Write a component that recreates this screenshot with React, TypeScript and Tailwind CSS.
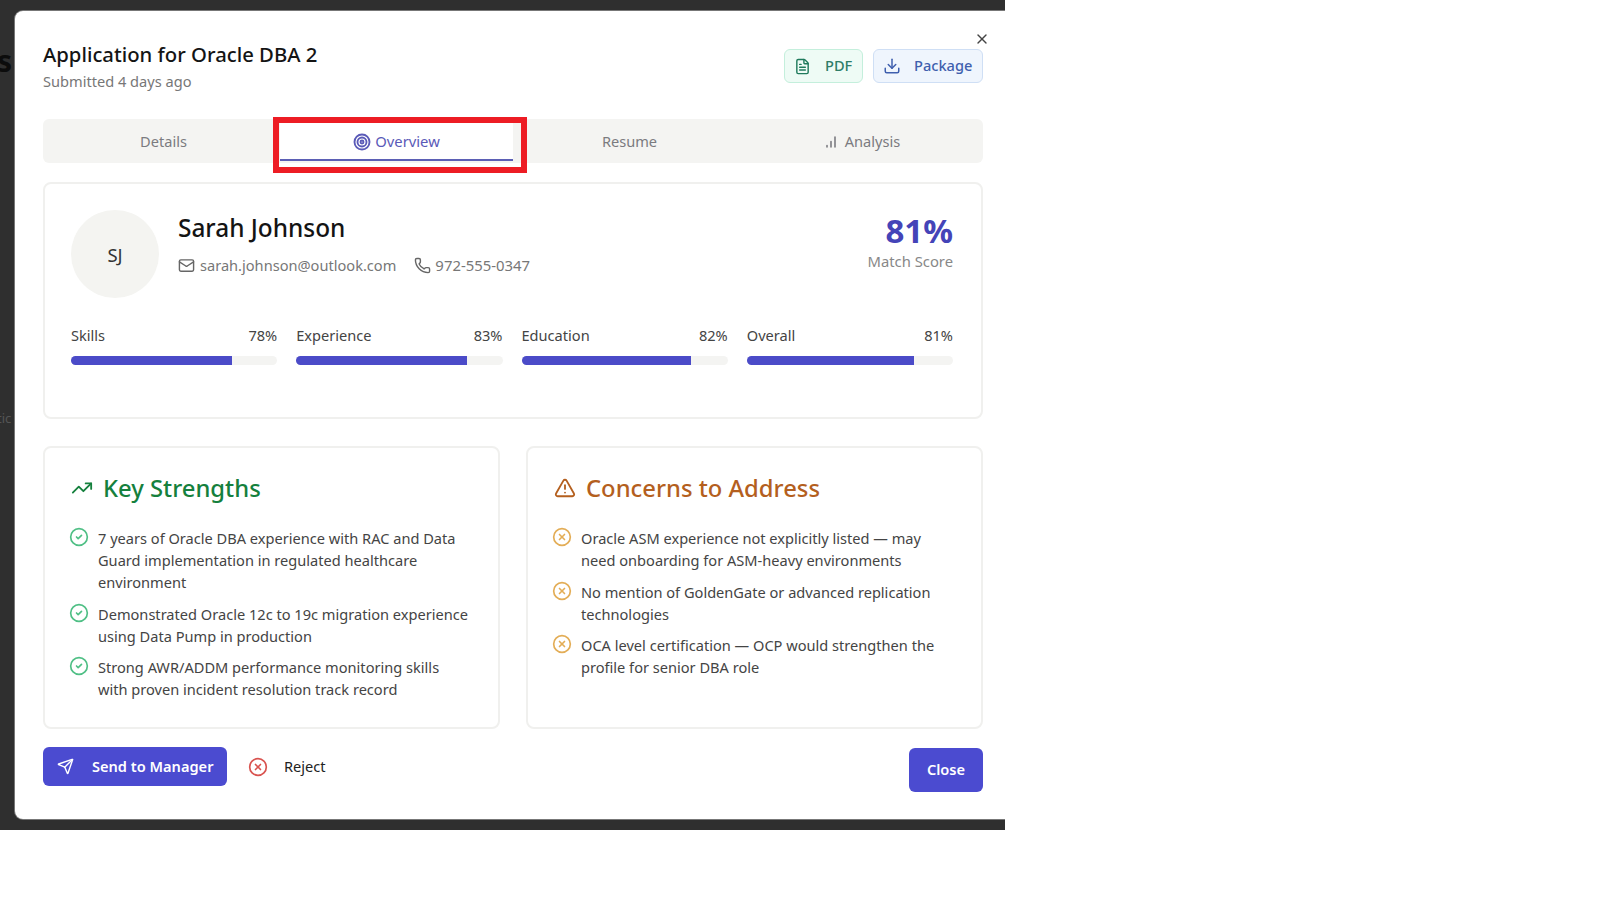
import { AlertTriangle, CircleCheck, CircleX, Download, FileText, Mail, Phone, Send, Target, TrendingUp, X } from 'lucide-react'

const scores = [
  { label: 'Skills', value: 78 },
  { label: 'Experience', value: 83 },
  { label: 'Education', value: 82 },
  { label: 'Overall', value: 81 },
]

const strengths = [
  '7 years of Oracle DBA experience with RAC and Data Guard implementation in regulated healthcare environment',
  'Demonstrated Oracle 12c to 19c migration experience using Data Pump in production',
  'Strong AWR/ADDM performance monitoring skills with proven incident resolution track record',
]

const concerns = [
  'Oracle ASM experience not explicitly listed — may need onboarding for ASM-heavy environments',
  'No mention of GoldenGate or advanced replication technologies',
  'OCA level certification — OCP would strengthen the profile for senior DBA role',
]

function BarsIcon() {
  return (
    <svg viewBox="0 0 12 14" className="h-[14px] w-[12px]" fill="none" stroke="currentColor" strokeWidth="1.6" strokeLinecap="round">
      <path d="M2 12v-1.5M6 12V6.5M10 12V2" />
    </svg>
  )
}

export default function App() {
  return (
    <div className="h-[900px] w-[1600px] overflow-hidden bg-white font-['Noto_Sans',sans-serif]">
      <div className="relative h-[830px] w-[1005px] overflow-hidden bg-[#2f2f2f] pt-[11px] pl-[15px]">
        <span className="absolute left-[-3px] top-[43px] text-[30px] font-bold leading-9 text-[#0c0c0c]">s</span>
        <span className="absolute left-[-3px] top-[408px] text-[13px] leading-5 text-[#555555]">tic</span>
        <div className="relative flex h-[808px] w-[990px] flex-col rounded-l-lg bg-white pl-[28px] pr-[22px] ring-1 ring-[#777777]">
          <X className="absolute right-[15px] top-[20px] h-[16px] w-[16px] text-[#444444]" />

          <div className="flex h-[108px] items-start justify-between pt-[29px]">
            <div>
              <h1 className="text-[20.3px] font-medium leading-[28px] text-[#141414]">Application for Oracle DBA 2</h1>
              <p className="mt-[3px] text-[14.6px] leading-[20px] text-[#777777]">Submitted 4 days ago</p>
            </div>
            <div className="mt-[9px] flex gap-[10px]">
              <button className="flex h-[34px] w-[79px] items-center gap-[14px] rounded-md border border-[#c4efdc] bg-[#eefbf5] pl-[9px] text-[14.6px] font-medium text-[#2f7d68]">
                <FileText className="h-[17px] w-[17px] text-[#1f7a5c]" />
                PDF
              </button>
              <button className="flex h-[34px] w-[110px] items-center gap-[13px] rounded-md border border-[#cfdff5] bg-[#eff5fd] pl-[9px] text-[14.6px] font-medium text-[#3f5fae]">
                <Download className="h-[18px] w-[18px] text-[#3f5fae]" />
                Package
              </button>
            </div>
          </div>

          <div className="grid h-[44px] grid-cols-4 rounded-md bg-[#f4f4f2] px-[4px] pt-[4px] pb-[2px] text-[14.6px] text-[#7b7b80]">
            <div className="flex items-center justify-center">Details</div>
            <div className="flex items-center justify-center gap-[4px] border-b-2 border-[#5b5fb5] bg-white pt-[1px] text-[14.8px] text-[#5a5ab8]">
              <Target className="h-[18px] w-[18px]" strokeWidth={2.5} />
              Overview
            </div>
            <div className="flex items-center justify-center">Resume</div>
            <div className="flex items-center justify-center gap-[8px]">
              <BarsIcon />
              Analysis
            </div>
          </div>

          <section className="mt-[19px] h-[237px] rounded-lg border-2 border-[#f0f0ee] pl-[26px] pr-[28px] pt-[26px]">
            <div className="flex h-[88px] justify-between">
              <div className="flex">
                <div className="flex h-[88px] w-[88px] items-center justify-center rounded-full bg-[#f4f4f1] pt-[2px] text-[18.5px] text-[#333333]">SJ</div>
                <div className="ml-[19px]">
                  <h2 className="text-[24.4px] font-medium leading-[36px] text-[#141414]">Sarah Johnson</h2>
                  <div className="mt-[9px] flex items-center text-[14.6px] leading-[20px] text-[#777777]">
                    <Mail className="h-[17px] w-[17px] text-[#666666]" />
                    <span className="ml-[5px]">sarah.johnson@outlook.com</span>
                    <Phone className="ml-[18px] h-[17px] w-[17px] text-[#666666]" />
                    <span className="ml-[4px] text-[14.9px]">972-555-0347</span>
                  </div>
                </div>
              </div>
              <div className="text-right">
                <div className="text-[33px] font-bold leading-[41px] text-[#4444b8]">81%</div>
                <div className="text-[14.8px] leading-[20px] text-[#888888]">Match Score</div>
              </div>
            </div>
            <div className="mt-[27px] grid grid-cols-4 gap-[19px]">
              {scores.map((score) => (
                <div key={score.label}>
                  <div className="flex justify-between text-[14.6px] leading-[20px] text-[#444444]">
                    <span>{score.label}</span>
                    <span>{score.value}%</span>
                  </div>
                  <div className="mt-[11px] h-[9px] overflow-hidden rounded-full bg-[#f4f4f2]">
                    <div className="h-full bg-[#4b4bc8]" style={{ width: `${score.value}%` }} />
                  </div>
                </div>
              ))}
            </div>
          </section>

          <div className="mt-[27px] grid h-[283px] grid-cols-2 gap-[26px]">
            <section className="rounded-lg border-2 border-[#f0f0ee] px-[26px] pt-[22px]">
              <h3 className="flex items-center gap-[10px] text-[23.8px] font-medium leading-[36px] text-[#15803d]">
                <TrendingUp className="h-[22px] w-[22px]" />
                Key Strengths
              </h3>
              <ul className="mt-[21px] flex flex-col gap-[9.6px]">
                {strengths.map((text) => (
                  <li key={text} className="flex text-[14.6px] leading-[22px] text-[#444444]">
                    <CircleCheck className="-ml-[2px] h-[20px] w-[20px] shrink-0 text-[#4fbf85]" />
                    <span className="ml-[9px]">{text}</span>
                  </li>
                ))}
              </ul>
            </section>
            <section className="rounded-lg border-2 border-[#f0f0ee] px-[26px] pt-[22px]">
              <h3 className="flex items-center gap-[10px] text-[23.8px] font-medium leading-[36px] text-[#b45f1e]">
                <AlertTriangle className="h-[22px] w-[22px]" />
                Concerns to Address
              </h3>
              <ul className="mt-[21px] flex flex-col gap-[9.6px]">
                {concerns.map((text) => (
                  <li key={text} className="flex text-[14.6px] leading-[22px] text-[#444444]">
                    <CircleX className="-ml-[2px] h-[20px] w-[20px] shrink-0 text-[#e3ad56]" />
                    <span className="ml-[9px]">{text}</span>
                  </li>
                ))}
              </ul>
            </section>
          </div>

          <div className="mt-[18px] flex items-start justify-between">
            <div className="flex items-center">
              <button className="flex h-[39px] w-[184px] items-center gap-[18px] rounded-md bg-[#4b4bd0] pl-[14px] text-[14.6px] font-semibold text-white">
                <Send className="h-[17px] w-[17px]" />
                Send to Manager
              </button>
              <CircleX className="ml-[21px] h-[20px] w-[20px] text-[#d9534f]" />
              <span className="ml-[16px] text-[14.6px] text-[#222222]">Reject</span>
            </div>
            <button className="mt-[1px] h-[44px] w-[74px] rounded-md bg-[#4b4bd0] text-[14.6px] font-semibold text-white">Close</button>
          </div>
        </div>
        <div className="absolute left-[273px] top-[117px] h-[56px] w-[254px] border-[6px] border-[#ed1c24]" />
      </div>
    </div>
  )
}
